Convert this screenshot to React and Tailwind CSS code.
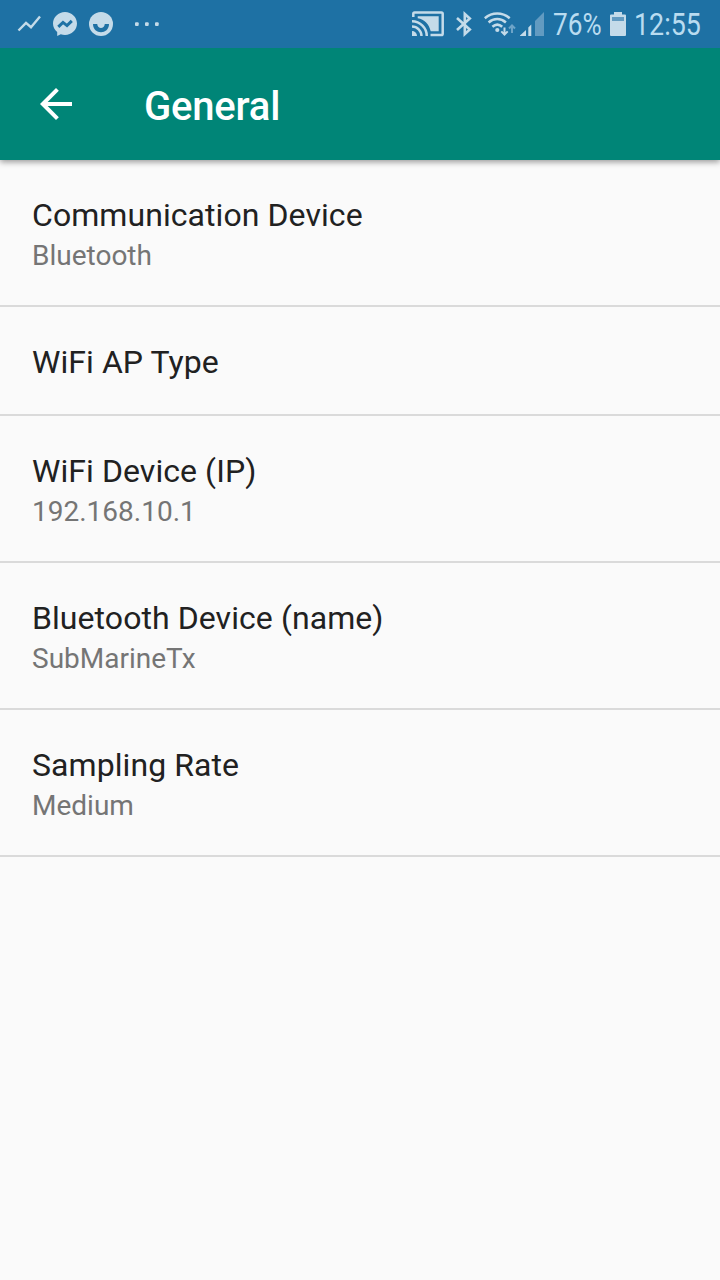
const items = [
  { title: "Communication Device", value: "Bluetooth" },
  { title: "WiFi AP Type" },
  { title: "WiFi Device (IP)", value: "192.168.10.1" },
  { title: "Bluetooth Device (name)", value: "SubMarineTx" },
  { title: "Sampling Rate", value: "Medium" },
];

function TrendIcon() {
  return (
    <svg className="h-6 w-6 shrink-0" viewBox="0 0 24 24" fill="none" stroke="#c4dbe9" strokeWidth="2.400">
      <path d="M1.500 18.500 9 10.800l5 4.400L23 4.500" />
    </svg>
  );
}

function MessengerIcon() {
  return (
    <svg className="ml-3 h-6 w-6 shrink-0" viewBox="0 0 24 24">
      <path fill="#c4dbe9" d="M12 0C5.400 0 0 5.200 0 11.500c0 3.500 1.600 6.400 4.200 8.400V24l3.600-1.700c1.300.5 2.700.7 4.200.7 6.600 0 12-5.200 12-11.500S18.600 0 12 0z" />
      <path d="M5.300 14.800 10 10.400l4 3.200 4.800-4.700" fill="none" stroke="#1e71a4" strokeWidth="3" />
    </svg>
  );
}

function SmileIcon() {
  return (
    <svg className="ml-3 h-6 w-6 shrink-0" viewBox="0 0 24 24">
      <circle cx="12" cy="12" r="12" fill="#c4dbe9" />
      <path d="M4 12h4.200c.4 5.200 7.200 5.200 7.600 0H20c0 11-16 11-16 0z" fill="#1e71a4" />
    </svg>
  );
}

function MoreIcon() {
  return (
    <svg className="ml-[22px] h-6 w-6 shrink-0" viewBox="0 0 24 24" fill="#c4dbe9">
      <rect x="0" y="10.200" width="3.700" height="3.700" rx="1" />
      <rect x="10" y="10.200" width="3.700" height="3.700" rx="1" />
      <rect x="20" y="10.200" width="3.700" height="3.700" rx="1" />
    </svg>
  );
}

function CastIcon() {
  return (
    <svg className="h-[26px] w-8 shrink-0" viewBox="0 0 32 26" fill="none" stroke="#c4dbe9" strokeWidth="2.500">
      <path d="M1.300 6V2.800Q1.300 1.500 2.600 1.500h26.800q1.300 0 1.300 1.300v20q0 1.300-1.300 1.300H18.500" />
      <path d="M5.700 5.300h21v15h-8C17 13 12.500 8.500 5.700 7.300z" fill="#c4dbe9" stroke="none" />
      <path d="M0 10.200A14.800 14.800 0 0 1 14.800 25M0 15.500A9.500 9.500 0 0 1 9.500 25" />
      <path d="M0 20a5 5 0 0 1 5 5H0z" fill="#c4dbe9" stroke="none" />
    </svg>
  );
}

function BluetoothIcon() {
  return (
    <svg className="ml-3 h-[26px] w-4 shrink-0" viewBox="0 0 16 26" fill="none" stroke="#c4dbe9" strokeWidth="2.600">
      <path d="m1 7 12.800 11.500L8.800 23V3l5 4.500L1 19" />
    </svg>
  );
}

function WifiIcon() {
  return (
    <svg className="ml-3 h-[26px] w-8 shrink-0" viewBox="0 0 32 26" fill="none" stroke="#c4dbe9" strokeWidth="2.500">
      <path d="M.8 7.200c7.300-6.400 17.600-6.400 24.900 0M4.600 11.500c5.100-4.600 12.200-4.600 17.300 0M8.400 15.800c3-2.700 6.800-2.700 9.800 0" />
      <circle cx="13.300" cy="19" r="2.100" fill="#c4dbe9" stroke="none" />
      <path d="M20.500 16.500v7M17.300 20.400l3.200 3.200 3.200-3.200" strokeWidth="2" />
      <path d="M28 22v-7M25 17.500l3-3 3 3" stroke="#6da4c8" strokeWidth="2" />
    </svg>
  );
}

function SignalIcon() {
  return (
    <svg className="ml-1 h-[26px] w-6 shrink-0" viewBox="0 0 24 26">
      <path d="M0 25v-.5L6 19v6zM8.300 25v-8.500L11.300 13.500V25z" fill="#c4dbe9" />
      <path d="M15 25V10L24 1v24z" fill="#629bc1" />
    </svg>
  );
}

function BatteryIcon() {
  return (
    <svg className="ml-2 h-6 w-4 shrink-0" viewBox="0 0 16 24">
      <path d="M4 0h8v2.500h3q1 0 1 1V23q0 1-1 1H1q-1 0-1-1V3.500q0-1 1-1h3z" fill="#c4dbe9" />
      <path d="M2 5h12v4H2z" fill="#629bc1" />
    </svg>
  );
}

function StatusBar() {
  return (
    <div className="relative z-10 flex h-12 items-center bg-[#1e71a4] pl-[17px] text-[31px] leading-9 text-[#b9dcf0]">
      <TrendIcon />
      <MessengerIcon />
      <SmileIcon />
      <MoreIcon />
      <div className="ml-auto flex w-[308px] items-center">
        <CastIcon />
        <BluetoothIcon />
        <WifiIcon />
        <SignalIcon />
        <span className="ml-[9px] block w-[49px] shrink-0 pt-0.5 whitespace-nowrap"><span className="block w-max origin-left scale-x-[0.845]">76%</span></span>
        <BatteryIcon />
        <span className="ml-2 block w-[70px] shrink-0 pt-0.5 whitespace-nowrap"><span className="block w-max origin-left scale-x-[0.865]">12:55</span></span>
      </div>
    </div>
  );
}

function AppBar() {
  return (
    <header className="relative flex h-28 items-center bg-[#008577] pl-8 shadow-[0_2px_6px_rgba(0,0,0,0.4)]">
      <svg className="h-12 w-12" viewBox="0 0 24 24" fill="#fff">
        <path d="M20 11H7.830l5.590-5.590L12 4l-8 8 8 8 1.410-1.410L7.830 13H20v-2z" />
      </svg>
      <h1 className="ml-16 pt-1.5 text-[40px] leading-[48px] font-medium tracking-[-0.2px] text-white">General</h1>
    </header>
  );
}

export default function App() {
  return (
    <div className="h-[1280px] w-[720px] overflow-hidden bg-[#fafafa] font-['Roboto',sans-serif]">
      <StatusBar />
      <AppBar />
      <ul>
        {items.map((item) => (
          <li key={item.title} className="border-b-2 border-[#dadada] px-8 pt-9 pb-[33px]">
            <div className="text-[32px] leading-[38px] tracking-[0.07px] text-[#212121]">{item.title}</div>
            {item.value && <div className="mt-[5px] text-[28px] leading-[33px] text-[#757575]">{item.value}</div>}
          </li>
        ))}
      </ul>
    </div>
  );
}
